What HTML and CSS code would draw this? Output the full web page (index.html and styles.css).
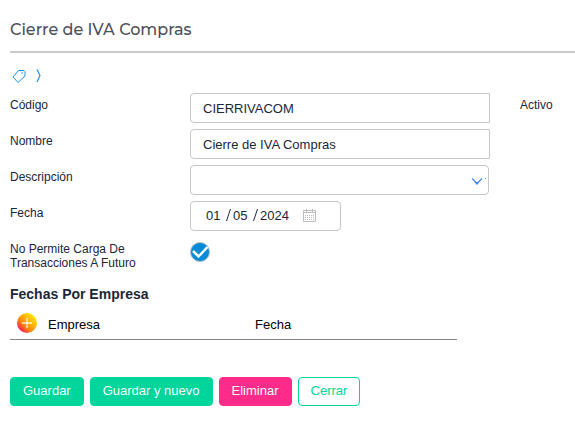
FILE: index.html
```html
<!DOCTYPE html>
<html lang="es">
<head>
<meta charset="utf-8">
<meta name="viewport" content="width=device-width, initial-scale=1">
<title>Cierre de IVA Compras</title>
<link rel="stylesheet" href="styles.css">
</head>
<body>
<main class="page">
  <h1 class="title">Cierre de IVA Compras</h1>
  <nav class="tools">
    <button class="icon-button" type="button" aria-label="Etiquetas">
      <svg width="14" height="14" viewBox="0 0 14 14" fill="none" stroke="#1b95e8"><path d="M6.500 1.500h5.500l1 1v4.500L6 13.500 1 8z"/><path d="M9.500 3.500h1v1h-1z" stroke-width=".5"/></svg>
    </button>
    <button class="icon-button" type="button" aria-label="Siguiente">
      <svg width="5" height="14" viewBox="0 0 5 14" fill="none" stroke="#1b95e8" stroke-width="1.200"><path d="M1 .5 4 6.500 1 13"/></svg>
    </button>
  </nav>
  <form class="form">
    <div class="fields">
      <div class="row">
        <label class="label" for="codigo">Código</label>
        <input class="box text-box" id="codigo" type="text" value="CIERRIVACOM">
        <span class="label">Activo</span>
      </div>
      <div class="row">
        <label class="label" for="nombre">Nombre</label>
        <input class="box text-box" id="nombre" type="text" value="Cierre de IVA Compras">
      </div>
      <div class="row">
        <label class="label" for="descripcion">Descripción</label>
        <div class="box combo">
          <input class="combo-input" id="descripcion" type="text">
          <button class="icon-button" type="button" aria-label="Desplegar">
            <svg width="17" height="10" viewBox="0 0 17 10" fill="none" stroke="#4387ed" stroke-width="1.200"><path d="M1 3.500 6 8.500l5-5"/><path d="M3.500 7h5L6 10z" fill="#4387ed" stroke="none"/><path d="M14.500 3v1" stroke-width="1"/></svg>
          </button>
        </div>
      </div>
      <div class="row">
        <label class="label" for="dia">Fecha</label>
        <div class="box date">
          <input class="part" id="dia" type="text" value="01" aria-label="Día"><svg class="slash" width="7" height="14" viewBox="0 0 7 14" fill="none" stroke="#20263a"><path d="M4.500 1 .5 13"/></svg><input class="part" type="text" value="05" aria-label="Mes"><svg class="slash" width="7" height="14" viewBox="0 0 7 14" fill="none" stroke="#20263a"><path d="M4.500 1 .5 13"/></svg><input class="part year" type="text" value="2024" aria-label="Año">
          <button class="icon-button" type="button" aria-label="Calendario">
            <svg width="13" height="13" viewBox="0 0 13 13" fill="none" stroke="#bdbdbd"><path d="M.5 1.500h12v11H.5zM.5 3.500h12M3.500 0v3M9.500 0v3"/><path d="M2 6.500h9M2 8.500h9M2 10.500h9" stroke-dasharray="1 1"/></svg>
          </button>
        </div>
      </div>
      <div class="row">
        <label class="label" for="futuro">No Permite Carga De Transacciones A Futuro</label>
        <div class="check-wrap">
          <input class="check" id="futuro" type="checkbox" checked>
          <svg class="check-mark" width="20" height="20" viewBox="0 0 20 20" fill="none" stroke="#fff" stroke-width="2.500"><path d="m3 9 5.500 5.500L17.500 5"/></svg>
        </div>
      </div>
    </div>
    <h2 class="subtitle">Fechas Por Empresa</h2>
    <table class="grid">
      <thead>
        <tr>
          <th class="add-cell">
            <button class="icon-button" type="button" aria-label="Agregar">
              <svg width="20" height="20" viewBox="0 0 20 20"><defs><linearGradient id="sun" x1="0" y1="1" x2="1" y2="0"><stop offset=".1" stop-color="#ff0077"/><stop offset=".35" stop-color="#ff7a10"/><stop offset=".55" stop-color="#ffaa08"/><stop offset=".9" stop-color="#fff200"/></linearGradient></defs><circle cx="10" cy="10" r="10" fill="url(#sun)"/><path d="M10 5v10M5 10h10" stroke="#fff3d6" stroke-width="1.300"/></svg>
            </button>
          </th>
          <th class="company">Empresa</th>
          <th>Fecha</th>
        </tr>
      </thead>
    </table>
    <div class="actions">
      <button class="button" type="button">Guardar</button>
      <button class="button" type="button">Guardar y nuevo</button>
      <button class="button danger" type="button">Eliminar</button>
      <button class="button outline" type="button">Cerrar</button>
    </div>
  </form>
</main>
</body>
</html>
```
FILE: styles.css
```css
* {
  box-sizing: border-box;
}

body {
  margin: 0;
  background: #fff;
  color: #20263a;
  font-family: "Liberation Sans", Arial, sans-serif;
  font-size: 13px;
}

input,
button {
  font: inherit;
  color: inherit;
}

.page {
  padding: 18px 0 24px 10px;
}

.title {
  margin: 0;
  padding-bottom: 9px;
  border-bottom: 2px solid #c9cacd;
  color: #4c505b;
  font-family: Montserrat, Inter, sans-serif;
  font-size: 16px;
  font-weight: 500;
  line-height: 24px;
}

.tools {
  display: flex;
  align-items: center;
  gap: 10px;
  height: 40px;
  padding: 6px 2px 0;
}

.icon-button {
  display: flex;
  padding: 0;
  border: 0;
  background: none;
}

.fields {
  display: grid;
  gap: 6px;
}

.row {
  display: grid;
  grid-template-columns: 150px 300px 1fr;
  column-gap: 30px;
  min-height: 30px;
}

.label {
  padding-top: 5px;
  font-size: 12px;
  line-height: 14px;
}

.box {
  height: 30px;
  border: 1px solid #c6c6c6;
  border-radius: 4px;
  background: #fff;
}

.text-box {
  width: 100%;
  padding: 0 12px;
  border-radius: 4px 0 0 4px;
}

.combo {
  display: flex;
  align-items: center;
  margin-right: 1px;
}

.combo-input {
  flex: 1;
  min-width: 0;
  padding: 0 12px;
  border: 0;
  background: none;
  outline: none;
}

.date {
  display: flex;
  align-items: center;
  width: 151px;
  padding: 0 0 2px 15px;
}

.part {
  width: 20px;
  padding: 0;
  border: 0;
  background: none;
}

.slash {
  flex: none;
}

.year {
  width: 43px;
}

.check-wrap {
  position: relative;
  padding-top: 5px;
}

.check {
  display: block;
  width: 20px;
  height: 20px;
  margin: 0;
  appearance: none;
  border: 1px solid #b5bcc2;
  border-radius: 50%;
}

.check:checked {
  background: #058bd8;
}

.check-mark {
  display: none;
  position: absolute;
  top: 5px;
  left: 0;
  pointer-events: none;
}

.check:checked + .check-mark {
  display: block;
}

.subtitle {
  margin: 16px 0 7px;
  font-size: 14px;
  line-height: 16px;
}

.grid {
  width: 447px;
  max-width: 100%;
  border-collapse: collapse;
  table-layout: fixed;
  border-bottom: 1px solid #888;
  color: #000;
}

.grid th {
  height: 30px;
  padding: 2px 0 0;
  font-weight: 400;
  text-align: left;
}

.grid .add-cell {
  width: 38px;
  padding: 0 0 2px 7px;
}

.company {
  width: 207px;
}

.actions {
  display: flex;
  gap: 6px;
  margin-top: 37px;
}

.button {
  height: 29px;
  padding: 0 12px 2px;
  border: 1px solid #00d69b;
  border-radius: 4px;
  background: #00d69b;
  color: #f0fffa;
}

.danger {
  border-color: #ff2b8b;
  background: #ff2b8b;
}

.outline {
  background: #fff;
  color: #00d69b;
}
```
